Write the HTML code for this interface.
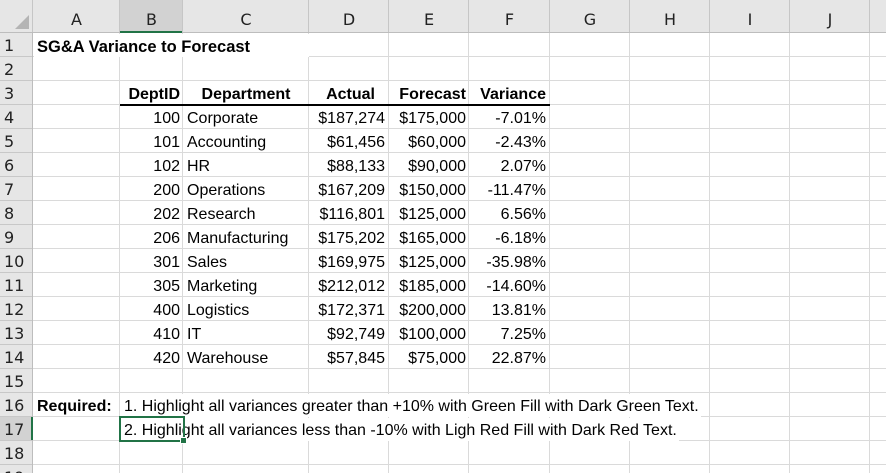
<!DOCTYPE html>
<html><head><meta charset="utf-8"><style>
html,body{margin:0;padding:0;background:#fff;width:886px;height:473px;overflow:hidden;position:relative}
.l{position:absolute;background:#dadada}
.hd{position:absolute;background:#e6e6e6;font:16px "DejaVu Sans","Liberation Sans",sans-serif;color:#222;box-sizing:border-box}
.t{position:absolute;font:16px "Liberation Sans",sans-serif;color:#000;white-space:nowrap;height:23px;line-height:26px}
.w{background:#fff}
.b{font-weight:bold}
.num{text-align:right}
</style></head><body>
<div id="g"></div>
<div id="data"></div>
<div class="t b w" style="left:34px;top:34px;width:272px;padding-left:3px;font-size:16.5px">SG&amp;A Variance to Forecast</div>

<div class="t b num" style="left:120px;top:82px;width:60px">DeptID</div>
<div class="t b" style="left:183px;top:82px;width:126px;text-align:center">Department</div>
<div class="t b num" style="left:309px;top:82px;width:66px">Actual</div>
<div class="t b num" style="left:389px;top:82px;width:77px">Forecast</div>
<div class="t b num" style="left:469px;top:82px;width:77px">Variance</div>
<div style="position:absolute;left:120px;top:104px;width:430px;height:2px;background:#000"></div>

<div class="t b" style="left:34px;top:394px;width:85px;padding-left:3px">Required:</div>
<div class="t w" style="left:121px;top:394px;padding-left:3px;padding-right:2px">1. Highlight all variances greater than +10% with Green Fill with Dark Green Text.</div>
<div class="t w" style="left:121px;top:418px;padding-left:3px;padding-right:2px">2. Highlight all variances less than -10% with Ligh Red Fill with Dark Red Text.</div>
<div style="position:absolute;left:119px;top:416px;width:62px;height:22px;border:2px solid #217346"></div>
<div style="position:absolute;left:180px;top:437px;width:5px;height:5px;background:#217346;border:1px solid #fff"></div>

<script>
var cols=[33,120,183,309,389,469,550,630,710,790,870];
var letters=["A","B","C","D","E","F","G","H","I","J",""];
var g="";
g+='<div class="hd" style="left:0;top:0;width:886px;height:33px"></div>';
g+='<div class="hd" style="left:0;top:0;width:33px;height:473px"></div>';
g+='<div class="hd" style="left:120px;top:0;width:63px;height:33px;background:#d2d2d2"></div>';
g+='<div class="hd" style="left:0;top:417px;width:33px;height:24px;background:#d2d2d2"></div>';
g+='<svg width="16" height="16" style="position:absolute;left:14px;top:14px"><polygon points="15,1 15,15 1,15" fill="#b4b4b4"/></svg>';
for(var i=0;i<cols.length;i++){
 var x=cols[i]; var nx=cols[i+1]||900;
 g+='<div class="l" style="left:'+(x-1)+'px;top:0;width:1px;height:473px"></div>';
 g+='<div class="l" style="left:'+(x-1)+'px;top:0;width:1px;height:33px;background:#c6c6c6"></div>';
 if(letters[i]) g+='<div class="hd" style="background:none;left:'+x+'px;top:0;width:'+(nx-x)+'px;height:33px;text-align:center;line-height:40px">'+letters[i]+'</div>';
}
g+='<div class="l" style="left:0;top:32px;width:886px;height:1px;background:#bdbdbd"></div>';
g+='<div class="l" style="left:120px;top:31px;width:62px;height:2px;background:#217346"></div>';
for(var r=1;r<=19;r++){
 var y=33+(r-1)*24;
 g+='<div class="l" style="left:0;top:'+(y+23)+'px;width:886px;height:1px"></div>';
 g+='<div class="l" style="left:0;top:'+(y+23)+'px;width:33px;height:1px;background:#c8c8c8"></div>';
 g+='<div class="hd" style="background:none;left:4px;top:'+y+'px;width:29px;height:24px;line-height:26px">'+r+'</div>';
}
g+='<div class="l" style="left:32px;top:33px;width:1px;height:440px;background:#bdbdbd"></div>';
g+='<div class="l" style="left:31px;top:417px;width:2px;height:23px;background:#217346"></div>';
document.getElementById("g").innerHTML=g;
var rows=[["100","Corporate","$187,274","$175,000","-7.01%"],["101","Accounting","$61,456","$60,000","-2.43%"],["102","HR","$88,133","$90,000","2.07%"],["200","Operations","$167,209","$150,000","-11.47%"],["202","Research","$116,801","$125,000","6.56%"],["206","Manufacturing","$175,202","$165,000","-6.18%"],["301","Sales","$169,975","$125,000","-35.98%"],["305","Marketing","$212,012","$185,000","-14.60%"],["400","Logistics","$172,371","$200,000","13.81%"],["410","IT","$92,749","$100,000","7.25%"],["420","Warehouse","$57,845","$75,000","22.87%"]];
var h="";
rows.forEach(function(r,i){var y=106+i*24;
h+='<div class="t num" style="left:120px;top:'+y+'px;width:60px">'+r[0]+'</div>';
h+='<div class="t" style="left:187px;top:'+y+'px;width:120px">'+r[1]+'</div>';
h+='<div class="t num" style="left:309px;top:'+y+'px;width:76px">'+r[2]+'</div>';
h+='<div class="t num" style="left:389px;top:'+y+'px;width:77px">'+r[3]+'</div>';
h+='<div class="t num" style="left:469px;top:'+y+'px;width:77px">'+r[4]+'</div>';});
document.getElementById("data").innerHTML=h;
</script>
</body></html>
